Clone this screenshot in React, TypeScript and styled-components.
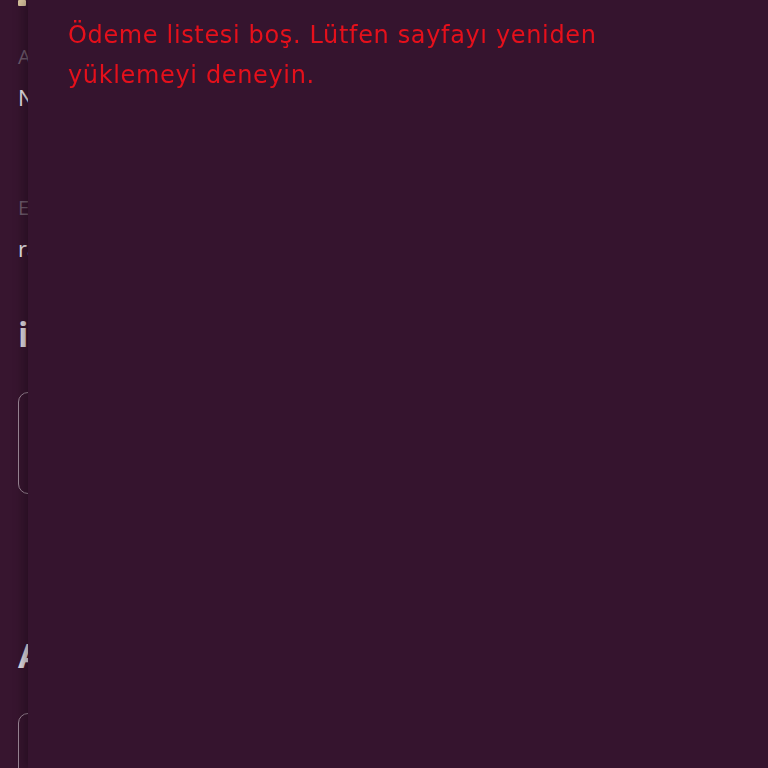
import styled, { createGlobalStyle } from 'styled-components';

const GlobalStyle = createGlobalStyle`
    html, body {
        margin: 0;
        padding: 0;
        background: #35142f;
        overflow: hidden;
    }
    * {
        box-sizing: border-box;
    }
`;

const Page = styled.div`
    height: 768px;
    overflow: hidden;
    padding: 0 0 0 18px;
    background: #37152f;
    font-family: 'Open Sans', 'Liberation Sans', sans-serif;
    display: flex;
    flex-direction: column;
`;

const TopMark = styled.div`
    width: 8px;
    height: 6px;
    background: #d8c39d;
    border-radius: 1px;
    flex-shrink: 0;
`;

const Field = styled.div<{ $gap: number }>`
    display: flex;
    flex-direction: column;
    gap: 14px;
    margin-top: ${({ $gap }) => $gap}px;
`;

const Label = styled.span`
    font-size: 20px;
    line-height: 26px;
    color: #6f5b6c;
`;

const Value = styled.span`
    font-size: 22px;
    line-height: 26px;
    color: #ece6ea;
`;

const Heading = styled.h2<{ $gap: number }>`
    margin: ${({ $gap }) => $gap}px 0 0;
    font-size: 34px;
    line-height: 40px;
    font-weight: 700;
    color: #e2dce1;
`;

const Box = styled.div<{ $height: number }>`
    margin-top: 38px;
    height: ${({ $height }) => $height}px;
    width: 700px;
    border: 1.5px solid #9c8797;
    border-radius: 10px;
    flex-shrink: 0;
`;

const Drawer = styled.aside`
    position: fixed;
    top: 0;
    left: 28px;
    right: 0;
    bottom: 0;
    background: #35142e;
    box-shadow: -4px 0 10px rgba(10, 0, 10, 0.35);
    padding: 15px 40px 0 40px;
`;

const ErrorText = styled.p`
    margin: 0;
    max-width: 640px;
    font-family: 'DejaVu Sans', 'Open Sans', sans-serif;
    font-size: 24px;
    letter-spacing: 0.65px;
    line-height: 40px;
    color: #e5101b;
`;

export default function App() {
    return (
        <>
            <GlobalStyle />
            <Page>
                <TopMark />
                <Field $gap={38}>
                    <Label>Ad</Label>
                    <Value>Nur</Value>
                </Field>
                <Field $gap={85}>
                    <Label>E-posta</Label>
                    <Value>rana</Value>
                </Field>
                <Heading $gap={53}>iletişim</Heading>
                <Box $height={102} />
                <Heading $gap={141}>Adres</Heading>
                <Box $height={100} />
            </Page>
            <Drawer>
                <ErrorText>
                    Ödeme listesi boş. Lütfen sayfayı yeniden yüklemeyi deneyin.
                </ErrorText>
            </Drawer>
        </>
    );
}
